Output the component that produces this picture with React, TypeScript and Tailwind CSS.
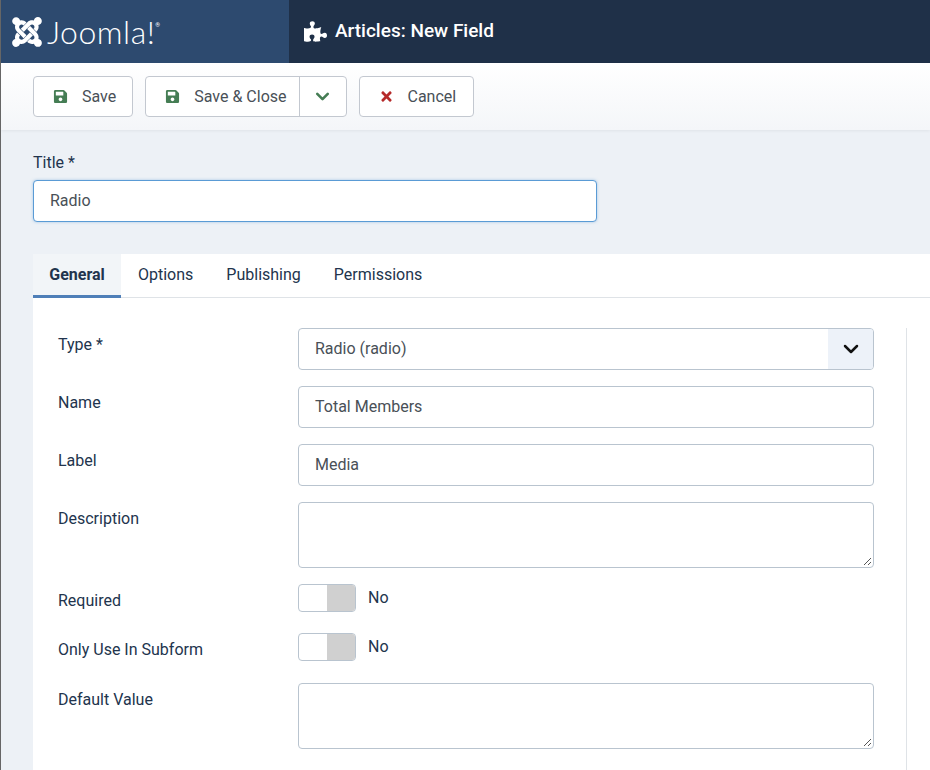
import type { ReactNode } from "react";
import { FaJoomla, FaPuzzlePiece, FaSave, FaTimes } from "react-icons/fa";
import { ChevronDown } from "lucide-react";

const inputCls =
  "w-full h-[42px] rounded border border-[#b9c4cf] bg-white px-4 flex items-center text-[#495057]";

function Row({ label, children, className }: { label: string; children: ReactNode; className?: string }) {
  return (
    <div className={`flex ${className ?? ""}`}>
      <div className="w-[240px] shrink-0 pt-[5px] text-[#22344d]">{label}</div>
      <div className="w-[576px]">{children}</div>
    </div>
  );
}

function Toggle() {
  return (
    <div className="flex items-start">
      <div className="flex w-[58px] h-[28px] rounded border border-[#b9c4cf] overflow-hidden bg-white">
        <div className="w-1/2" />
        <div className="w-1/2 bg-[#d0d0d0]" />
      </div>
      <span className="ml-3 mt-[2px] text-[#22344d] leading-6">No</span>
    </div>
  );
}

function TextArea() {
  return (
    <div className="relative w-full h-[66px] rounded border border-[#b9c4cf] bg-white">
      <svg className="absolute right-[1px] bottom-[1px]" width="9" height="9" viewBox="0 0 9 9" stroke="#555" strokeWidth="1">
        <path d="M1 8 8 1M5 8 8 5" />
      </svg>
    </div>
  );
}

function ToolButton({ icon, label, className }: { icon: ReactNode; label: string; className: string }) {
  return (
    <div className={`flex items-center gap-[14px] pl-[19px] h-full text-[#495057] ${className}`}>
      {icon}
      <span>{label}</span>
    </div>
  );
}

export default function App() {
  return (
    <div className="w-[930px] h-[770px] overflow-hidden bg-[#edf1f6] border-l border-[#666] text-[16px] font-['Roboto',sans-serif]">
      <header className="h-[63px] flex bg-[#1f3048]">
        <div className="w-[288px] bg-[#2d4a6f] flex items-center pl-[9px] text-white">
          <FaJoomla className="w-[34px] h-[34px]" />
          <span className="ml-[3px] text-[32px] font-['Lato',sans-serif] font-light leading-none tracking-[0.5px]">Joomla!</span>
          <span className="text-[6px] self-start mt-[20px]">®</span>
        </div>
        <div className="flex items-center pl-[15px] text-white pb-[1px]">
          <FaPuzzlePiece className="w-[23px] h-[21px]" />
          <span className="ml-[8px] text-[19px] font-medium">Articles: New Field</span>
        </div>
      </header>

      <div className="h-[67px] bg-gradient-to-b from-white to-[#f4f6f9] shadow-[0_1px_3px_rgba(0,0,0,0.06)] flex items-start pt-[13px] pl-[32px] gap-3">
        <div className="h-[41px] rounded border border-[#c3c8d0] bg-white">
          <ToolButton className="pr-[16px]" icon={<FaSave className="w-[15px] h-[15px] text-[#457d54]" />} label="Save" />
        </div>
        <div className="h-[41px] rounded border border-[#c3c8d0] bg-white flex">
          <ToolButton className="pr-[12px]" icon={<FaSave className="w-[15px] h-[15px] text-[#457d54]" />} label="Save & Close" />
          <div className="w-[47px] border-l border-[#c3c8d0] flex items-center justify-center">
            <ChevronDown className="w-[21px] h-[21px] text-[#457d54]" strokeWidth={3} />
          </div>
        </div>
        <div className="h-[41px] rounded border border-[#c3c8d0] bg-white">
          <ToolButton className="pr-[17px]" icon={<FaTimes className="w-[15px] h-[15px] text-[#b52a2a]" />} label="Cancel" />
        </div>
      </div>

      <div className="pl-[32px]">
        <div className="pt-[21px] h-[50px] text-[#22344d]">Title *</div>
        <div className="w-[564px] h-[42px] rounded border border-[#5a9bd5] bg-white px-4 flex items-center text-[#495057] shadow-[0_0_3px_rgba(90,155,213,0.5)]">
          Radio
        </div>

        <div className="mt-[32px] bg-white">
          <div className="flex h-[44px] border-b border-[#dfe3e7] text-[#22344d]">
            <div className="w-[88px] flex items-center justify-center font-bold bg-[#f2f5f8] border-b-[3px] border-[#4f7fb8] h-[44px] pt-[1px]">General</div>
            <div className="flex items-center pl-[17px] pb-[2px]">Options</div>
            <div className="flex items-center pl-[33px] pb-[2px]">Publishing</div>
            <div className="flex items-center pl-[33px] pb-[2px]">Permissions</div>
          </div>

          <div className="pl-[25px] pt-[30px]">
            <div className="w-[849px] border-r border-[#dfe3e7] h-[442px]">
              <Row label="Type *" className="mb-4">
                <div className="relative w-full h-[42px] rounded border border-[#b9c4cf] bg-white px-4 flex items-center text-[#495057] overflow-hidden">
                  Radio (radio)
                  <div className="absolute right-0 top-0 bottom-0 w-[45px] bg-[#edf2f9] flex items-center justify-center">
                    <ChevronDown className="w-[24px] h-[24px] text-[#111]" strokeWidth={2.5} />
                  </div>
                </div>
              </Row>
              <Row label="Name" className="mb-4">
                <div className={inputCls}>Total Members</div>
              </Row>
              <Row label="Label" className="mb-4">
                <div className={inputCls}>Media</div>
              </Row>
              <Row label="Description" className="mb-4">
                <TextArea />
              </Row>
              <Row label="Required" className="h-[33px] mb-4">
                <Toggle />
              </Row>
              <Row label="Only Use In Subform" className="h-[34px] mb-4">
                <Toggle />
              </Row>
              <Row label="Default Value">
                <TextArea />
              </Row>
            </div>
          </div>
        </div>
      </div>
    </div>
  );
}
